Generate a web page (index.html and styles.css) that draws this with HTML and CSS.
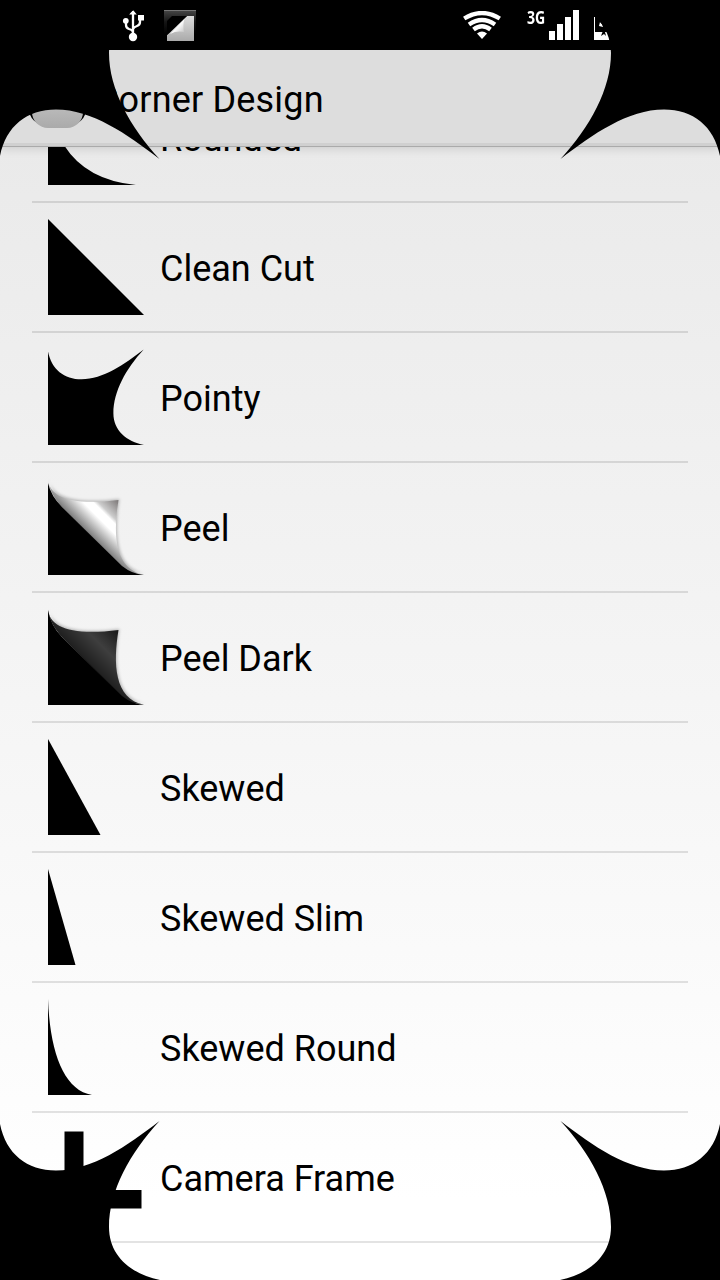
FILE: index.html
```html
<!DOCTYPE html>
<html lang="en">
<head>
<meta charset="utf-8">
<title>Corner Design</title>
<link rel="stylesheet" href="styles.css">
</head>
<body>
<svg class="defs" width="0" height="0" aria-hidden="true">
  <defs>
    <symbol id="pointy" viewBox="0 0 160 160"><path d="M0 4C6 34 27 50.500 56 50.500C92 50.500 127 26 159.500 1C130 33 109 71 109 107C109 136 131 154 160 160H0Z"/></symbol>
    <linearGradient id="silver" gradientUnits="userSpaceOnUse" x1="38" y1="53" x2="70" y2="21">
      <stop offset="0" stop-color="#777"/><stop offset=".3" stop-color="#d8d8d8"/><stop offset=".42" stop-color="#fff"/><stop offset=".58" stop-color="#fff"/><stop offset=".66" stop-color="#ccc"/><stop offset="1" stop-color="#7c7878"/>
    </linearGradient>
    <linearGradient id="coal" gradientUnits="userSpaceOnUse" x1="38" y1="53" x2="70" y2="21">
      <stop offset="0" stop-color="#1e1e1e"/><stop offset=".5" stop-color="#3e3e3e"/><stop offset=".7" stop-color="#303030"/><stop offset="1" stop-color="#181818"/>
    </linearGradient>
    <linearGradient id="tile" x1="0" y1="0" x2="0" y2="1"><stop offset="0" stop-color="#ddd"/><stop offset="1" stop-color="#aaa"/></linearGradient>
    <linearGradient id="sheen" x1="0" y1="0" x2="1" y2="1"><stop offset="0" stop-color="#888"/><stop offset=".5" stop-color="#fff"/><stop offset="1" stop-color="#bbb"/></linearGradient>
    <linearGradient id="gloss" x1="0" y1="0" x2="0" y2="1"><stop offset="0" stop-color="#484848"/><stop offset=".5" stop-color="#151515"/><stop offset="1" stop-color="#000"/></linearGradient>
  </defs>
</svg>

<div class="screen">
  <header class="status">
    <svg class="usb" viewBox="0 0 24 32">
      <path d="M12 4V27M12 23Q12 20 8 19Q5 18 5 15V11M12 19Q13 17 16 16Q19 15 19 12V8" fill="none" stroke="#fff" stroke-width="2.300"/>
      <path d="M12 0L15.800 4.500H8.200Z" fill="#fff"/><circle cx="12" cy="27" r="4.200" fill="#fff"/><circle cx="4.800" cy="10.800" r="2.900" fill="#fff"/><rect x="17" y="5" width="6" height="5.500" fill="#fff"/>
    </svg>
    <svg class="note" viewBox="0 0 32 32">
      <rect width="32" height="24" fill="url(#gloss)"/><rect width="32" height="1" fill="#777"/>
      <path d="M23 6H30V31H3V25Z" fill="url(#tile)"/>
      <path d="M3 25V11L8 6H23Z" fill="#000"/><path d="M20.500 9L6 24Q13 20.500 20 22Q18.500 15 20.500 9Z" fill="url(#sheen)"/>
    </svg>
    <svg class="wifi" viewBox="0 0 38 28">
      <g fill="none" stroke="#fff" stroke-width="4.300"><path d="M1.200 7.500Q19-3.500 36.800 7.500"/><path d="M6 13.500Q19 4.500 32 13.500"/><path d="M10.500 18.500Q19 12 27.500 18.500"/></g><path d="M14 22.500Q19 18.500 24 22.500L19 28Z" fill="#fff"/>
    </svg>
    <span class="network">3G</span>
    <svg class="signal" viewBox="0 0 30 30"><path d="M0 21h6v9H0zM8 14h6v16H8zM16 7h6v23h-6zM24 0h6v30h-6z" fill="#fff"/></svg>
    <svg class="battery" viewBox="0 0 40 24"><path d="M0 1H36V24H0Z" fill="#fff"/><path d="M1 1H30V16H1Z" fill="#000"/><path d="M5 10L6 6L8 8L9 11Z" fill="#fff"/><path d="M10 12L7 20L10 18L12 20Z" fill="#000"/></svg>
  </header>

  <div class="actionbar">
    <svg class="appicon" viewBox="0 0 64 64"><rect x="2" y="0" width="57" height="60" rx="16" fill="#000"/><rect x="5" y="0" width="51" height="63" rx="16" fill="url(#tile)"/></svg>
    <h1 class="title">Corner Design</h1>
  </div>

  <main class="viewport">
    <ul class="list">
      <li class="row"><svg class="shape" viewBox="0 0 96 96"><path d="M0 0Q6 88 88 96H0Z"/></svg><span class="label">Rounded</span></li>
      <li class="row"><svg class="shape" viewBox="0 0 96 96"><path d="M0 0L96 96H0Z"/></svg><span class="label">Clean Cut</span></li>
      <li class="row"><svg class="shape" viewBox="0 0 160 160"><use href="#pointy"/></svg><span class="label">Pointy</span></li>
      <li class="row"><svg class="shape" viewBox="0 0 96 96"><path class="fold" d="M0 1C2 18 23 27 70.500 21C65 54 66 90 96 95.800L79 93L14 28C6 19 2 12 0 1Z" fill="url(#silver)"/><path d="M0 4V96H96Q84 95 74 87L14 28Q3 17 0 4Z"/></svg><span class="label">Peel</span></li>
      <li class="row"><svg class="shape" viewBox="0 0 96 96"><path class="fold" d="M0 1C2 18 23 27 70.500 21C65 54 66 90 96 95.800L79 93L14 28C6 19 2 12 0 1Z" fill="url(#coal)"/><path d="M0 1V96H96Q84 95 74 87L14 28Q3 17 0 1Z"/></svg><span class="label">Peel Dark</span></li>
      <li class="row"><svg class="shape" viewBox="0 0 96 96"><path d="M0 0L52.500 96H0Z"/></svg><span class="label">Skewed</span></li>
      <li class="row"><svg class="shape" viewBox="0 0 96 96"><path d="M0 0L27.500 96H0Z"/></svg><span class="label">Skewed Slim</span></li>
      <li class="row"><svg class="shape" viewBox="0 0 96 96"><path d="M0 0C2 54 16 91 44 96H0Z"/></svg><span class="label">Skewed Round</span></li>
      <li class="row"><svg class="shape" viewBox="0 0 96 96"><path d="M16.500 2.500H35.500V61H93.500V79.500H16.500Z"/></svg><span class="label">Camera Frame</span></li>
    </ul>
  </main>

  <svg class="corner tl"><use href="#pointy"/></svg>
  <svg class="corner tr"><use href="#pointy"/></svg>
  <svg class="corner bl"><use href="#pointy"/></svg>
  <svg class="corner br"><use href="#pointy"/></svg>
</div>
</body>
</html>
```
FILE: styles.css
```css
* { box-sizing: border-box; }
body { margin: 0; font-family: Roboto, "Noto Sans", sans-serif; color: #000; }
.defs { position: absolute; }
.screen { position: relative; width: 720px; height: 1280px; overflow: hidden; display: flex; flex-direction: column; background: linear-gradient(#eaeaea 0, #eaeaea 146px, #fff 1200px); }
.status { height: 50px; flex: none; background: #000; display: flex; align-items: flex-start; padding: 10px 0 0 121px; }
.status svg { display: block; flex: none; }
.usb { width: 24px; height: 32px; }
.note { width: 32px; height: 32px; margin-left: 19px; }
.wifi { width: 38px; height: 28px; margin: 1px 0 0 267px; }
.network { width: 20px; margin: -1px 0 0 26px; color: #fff; font: bold 17px/17px "Noto Sans", sans-serif; white-space: nowrap; transform: scaleX(.83); transform-origin: 0 0; }
.signal { width: 30px; height: 30px; margin-left: 2px; }
.battery { width: 40px; height: 24px; margin: 6px 0 0 15px; }
.actionbar { height: 96px; flex: none; background: #ddd; border-bottom: 3px solid #d0d0d0; display: flex; align-items: center; padding-left: 27px; z-index: 1; box-shadow: 0 1px 0 #aaa, 0 2px 10px rgba(0,0,0,.15); }
.appicon { width: 64px; height: 64px; }
.title { margin: 7px 0 0 4px; font-size: 36px; font-weight: 400; line-height: 42px; letter-spacing: .18px; white-space: nowrap; }
.viewport { flex: 1; overflow: hidden; padding: 0 32px; }
.list { list-style: none; margin: -73px 0 0; padding: 0; }
.row { height: 130px; display: flex; align-items: center; padding: 0 16px; border-bottom: 2px solid rgba(0,0,0,.11); }
.shape { width: 96px; height: 96px; display: block; flex: none; overflow: visible; }
.fold { filter: drop-shadow(1px -1px 1.5px rgba(0,0,0,.25)); }
.label { margin: 3px 0 0 16px; font-size: 36px; line-height: 42px; white-space: nowrap; }
.corner { position: absolute; width: 160px; height: 160px; z-index: 2; }
.tl { left: 0; top: 0; transform: scaleY(-1); }
.tr { right: 0; top: 0; transform: scale(-1,-1); }
.bl { left: 0; bottom: 0; }
.br { right: 0; bottom: 0; transform: scaleX(-1); }
```
